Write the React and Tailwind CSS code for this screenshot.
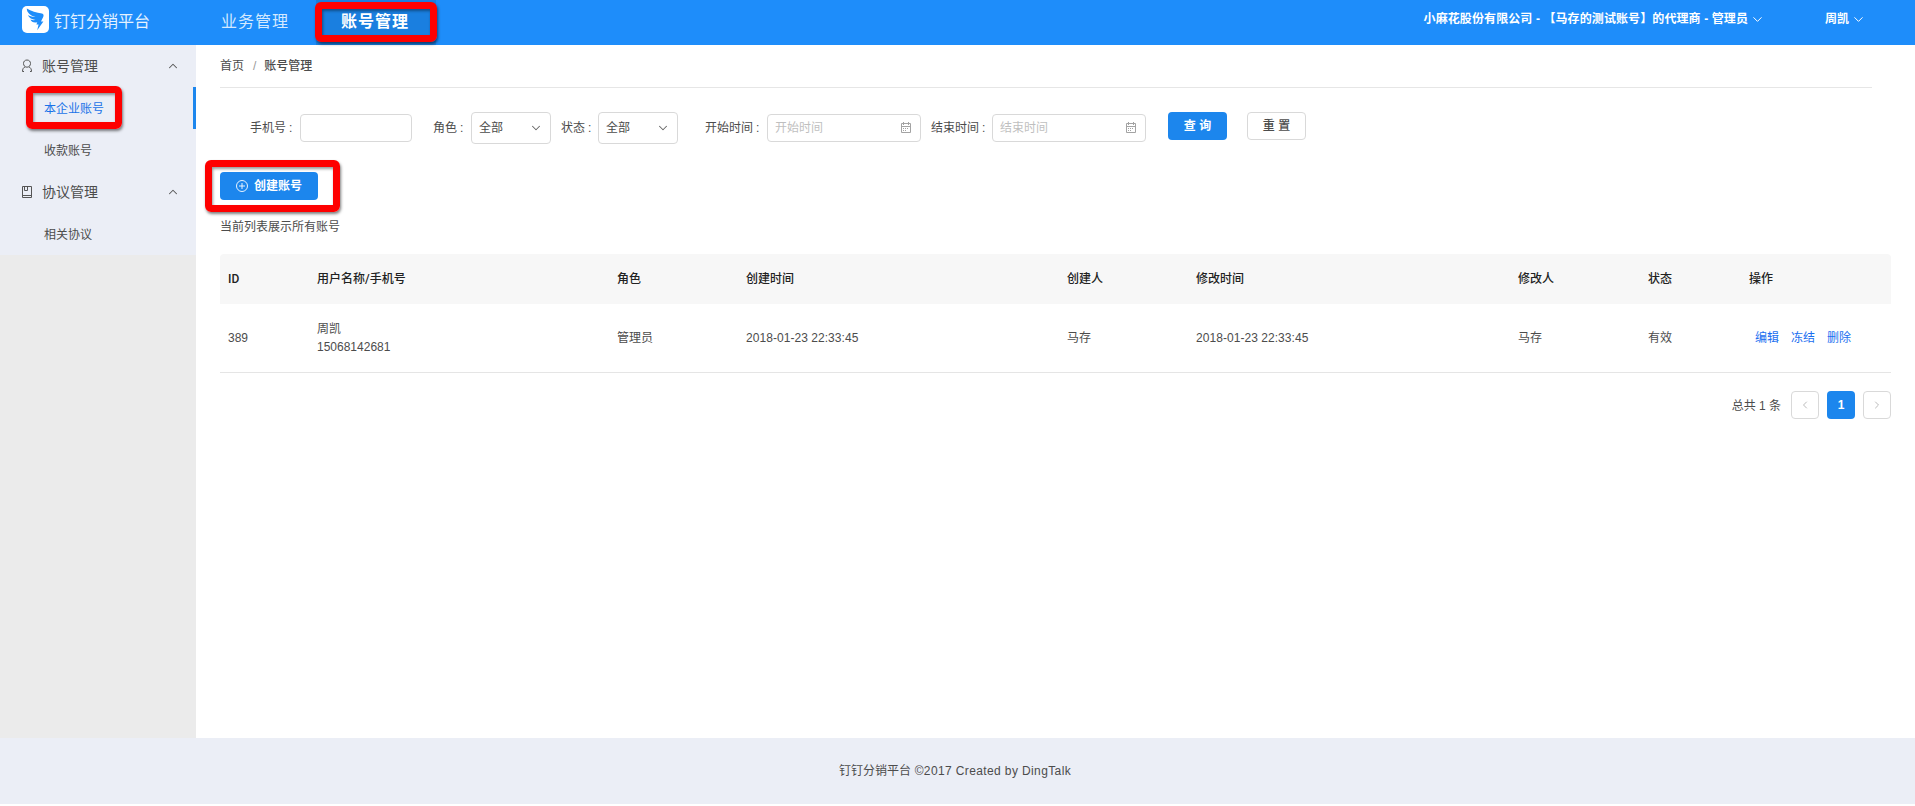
import { ChevronDown, ChevronUp, ChevronLeft, ChevronRight } from "lucide-react";

const columns = ["ID", "用户名称/手机号", "角色", "创建时间", "创建人", "修改时间", "修改人", "状态", "操作"];

const rows = [
    {
        id: 389,
        name: "周凯",
        phone: "15068142681",
        role: "管理员",
        createdAt: "2018-01-23 22:33:45",
        creator: "马存",
        updatedAt: "2018-01-23 22:33:45",
        updater: "马存",
        status: "有效",
    },
];

const gridCols = "grid grid-cols-[89px_300px_129px_321px_129px_322px_130px_101px_150px] items-center";

const Logo = () => (
    <svg viewBox="0 0 27 27" className="w-[27px] h-[27px] shrink-0">
        <rect width="27" height="27" rx="5" fill="#fff" />
        <path
            d="M4.8 2.4C9 5.2 14.5 6.2 20 7.6C21.6 8.1 21.9 9.4 21.3 10.8L19 15.4H21.4L15.2 24.2L16.6 18.4H14.4L15.3 16.2C11.6 17 9.4 15.6 8.4 13.4C10.2 14.2 12 14.3 13.6 14C9.2 13.4 6.800 11.6 6 9C8.400 10.400 11 11 13.600 11C8.200 9.300 4.800 6.600 4.800 2.400Z"
            fill="#1e8dfa"
        />
    </svg>
);

const UserIcon = () => (
    <svg viewBox="0 0 12 14" fill="none" stroke="#555" className="w-3 h-[14px]">
        <path d="M6 1C3.8 1 2.5 2.5 2.5 4.5S4 8.2 6 8.2S9.5 6.5 9.5 4.5S8.2 1 6 1ZM4.2 7.8C2.2 8.6 1.5 10.3 1.5 12.5H3M7.8 7.8C9.8 8.6 10.5 10.3 10.5 12.5H9" />
    </svg>
);

const BookIcon = () => (
    <svg viewBox="0 0 12 14" fill="none" stroke="#555" className="w-3 h-[14px]">
        <path d="M1.5 1.5H10.5V12.5H1.5ZM3.5 1.5V5.5H6.5V1.500M1.500 10.500H10.500" />
    </svg>
);

const CalendarIcon = () => (
    <svg viewBox="0 0 12 12" fill="none" stroke="#a3a3a3" className="w-3 h-3">
        <path d="M1.5 1.5H10.5V10.5H1.5ZM1.5 4.5H10.5M3.5 0V3M8.5 0V3" />
        <path d="M3 6.5H9M3 8.5H7" strokeDasharray="1 1" />
    </svg>
);

const PlusCircle = () => (
    <svg viewBox="0 0 12 12" fill="none" stroke="#fff" strokeWidth="0.9" className="w-3 h-3">
        <circle cx="6" cy="6" r="5.5" />
        <path d="M3 6H9M6 3V9" />
    </svg>
);

// red frame around the controls the guide points to
const Marker = ({ className }) => (
    <div
        className={`absolute border-[7px] border-[#fe0000] rounded-md shadow-[1px_2px_3px_rgba(0,0,0,0.5),inset_1px_2px_3px_rgba(0,0,0,0.4)] pointer-events-none ${className}`}
    />
);

const MenuGroup = ({ icon, title }) => (
    <div className="h-[42px] pl-[21px] pr-4 flex items-center text-sm">
        {icon}
        <span className="ml-[9px] -mt-px flex-1">{title}</span>
        <ChevronUp className="w-[14px] h-[14px] text-[#555]" strokeWidth={1.8} />
    </div>
);

const Label = ({ className, children }) => (
    <span className={`whitespace-nowrap ${className}`}>
        {children}
        <span className="ml-[3px]">:</span>
    </span>
);

const Select = () => (
    <div className="w-20 h-8 pl-[7px] pr-[7px] border border-[#d9d9d9] rounded flex items-center justify-between">
        全部
        <ChevronDown className="w-[14px] h-[14px] text-[#666]" strokeWidth={1.8} />
    </div>
);

const DateInput = ({ placeholder }) => (
    <div className="w-[154px] h-7 pl-[7px] pr-2 border border-[#d9d9d9] rounded flex items-center justify-between text-[#bfbfbf]">
        {placeholder}
        <CalendarIcon />
    </div>
);

const Header = () => (
    <header className="h-[45px] bg-[#1e8dfa] text-white flex shrink-0">
        <div className="w-[196px] pl-[22px] pb-[6px] flex items-center text-base whitespace-nowrap">
            <Logo />
            <span className="ml-[5px] mt-[5px] text-[#e5f2ff]">钉钉分销平台</span>
        </div>
        <nav className="flex text-base tracking-[1px]">
            <div className="w-[120px] pl-[25px] pb-[2px] flex items-center text-[#d4e9ff]">业务管理</div>
            <div className="relative w-[120px] pl-[25px] pb-[2px] flex items-center font-bold bg-[#1a7fe0]">
                账号管理
                <Marker className="-left-px top-[2px] w-[122px] h-10" />
            </div>
        </nav>
        <div className="ml-auto pr-[49px] pb-[7px] flex items-center text-xs font-bold">
            <span className="whitespace-pre tracking-[0.1px]">小麻花股份有限公司 - 【马存的测试账号】的代理商 - 管理员</span>
            <ChevronDown className="w-[15px] h-[15px] ml-[2px]" strokeWidth={1.6} />
            <span className="ml-[60px]">周凯</span>
            <ChevronDown className="w-[15px] h-[15px] ml-[2px]" strokeWidth={1.6} />
        </div>
    </header>
);

const Sidebar = () => (
    <aside className="w-[196px] shrink-0 bg-[#ebebeb]">
        <div className="bg-[#ebeef6]">
            <MenuGroup icon={<UserIcon />} title="账号管理" />
            <div className="relative h-[42px] pl-11 pt-px flex items-center text-[#1a73e8] border-r-[3px] border-[#1c86ed]">
                本企业账号
                <Marker className="left-[26px] -top-px w-24 h-[43px]" />
            </div>
            <div className="h-[42px] pl-11 pt-px flex items-center">收款账号</div>
            <MenuGroup icon={<BookIcon />} title="协议管理" />
            <div className="h-[42px] pl-11 pt-px flex items-center">相关协议</div>
        </div>
    </aside>
);

const SearchForm = () => (
    <div className="mt-6 h-8 flex items-center">
        <Label className="w-20 pl-[30px]">手机号</Label>
        <div className="w-28 h-7 border border-[#d9d9d9] rounded" />
        <Label className="w-[59px] pl-[21px]">角色</Label>
        <Select />
        <Label className="w-[47px] pl-[10px]">状态</Label>
        <Select />
        <Label className="w-[89px] pl-[27px]">开始时间</Label>
        <DateInput placeholder="开始时间" />
        <Label className="w-[71px] pl-[10px]">结束时间</Label>
        <DateInput placeholder="结束时间" />
        <button className="ml-[22px] mb-1 w-[59px] h-7 rounded bg-[#1c86ed] text-white font-bold">查 询</button>
        <button className="ml-5 mb-1 w-[59px] h-7 rounded border border-[#d9d9d9] font-medium">重 置</button>
    </div>
);

const AccountTable = () => (
    <div className="mt-[18px] w-[1671px]">
        <div className={`${gridCols} h-[50px] bg-[#f7f7f7] rounded-t text-[#222] font-medium font-[Roboto,'Noto_Sans_CJK_SC',sans-serif]`}>
            {columns.map((title) => (
                <div key={title} className="pl-2">{title}</div>
            ))}
        </div>
        {rows.map((row) => (
            <div key={row.id} className={`${gridCols} h-[69px] border-b border-[#e5e5e5]`}>
                <div className="pl-2">{row.id}</div>
                <div className="pl-2 leading-[18px]">
                    {row.name}
                    <br />
                    {row.phone}
                </div>
                <div className="pl-2">{row.role}</div>
                <div className="pl-2 tracking-[0.05px]">{row.createdAt}</div>
                <div className="pl-2">{row.creator}</div>
                <div className="pl-2 tracking-[0.05px]">{row.updatedAt}</div>
                <div className="pl-2">{row.updater}</div>
                <div className="pl-2">{row.status}</div>
                <div className="pl-[14px] flex gap-3 text-[#1a6ff0]">
                    <a>编辑</a>
                    <a>冻结</a>
                    <a>删除</a>
                </div>
            </div>
        ))}
    </div>
);

const Pagination = () => (
    <div className="mt-[18px] w-[1671px] h-7 flex items-center justify-end">
        <span className="mr-[10px] mt-px">总共 1 条</span>
        <button className="w-7 h-7 mr-2 border border-[#d9d9d9] rounded flex items-center justify-center text-[#bbb]">
            <ChevronLeft className="w-3 h-3" />
        </button>
        <button className="w-7 h-7 mr-2 rounded bg-[#1c86ed] text-white font-bold">1</button>
        <button className="w-7 h-7 border border-[#d9d9d9] rounded flex items-center justify-center text-[#bbb]">
            <ChevronRight className="w-3 h-3" />
        </button>
    </div>
);

const App = () => {
    return (
        <div className="h-[804px] flex flex-col bg-white text-xs text-[#4c4c4c] font-['Liberation_Sans','Noto_Sans_CJK_SC',sans-serif]">
            <Header />
            <div className="flex-1 flex">
                <Sidebar />
                <main className="flex-1 pl-6">
                    <div className="w-[1652px] h-[43px] flex items-center border-b border-[#e6e6e6]">
                        <span>首页</span>
                        <span className="ml-[9px] mr-2 text-[#999]">/</span>
                        <span className="font-medium">账号管理</span>
                    </div>
                    <SearchForm />
                    <div className="relative mt-7 w-[98px]">
                        <button className="w-full h-7 rounded bg-[#1c86ed] text-white font-bold flex items-center pl-4">
                            <PlusCircle />
                            <span className="ml-[6px]">创建账号</span>
                        </button>
                        <Marker className="-left-[15px] -top-3 w-[135px] h-[52px]" />
                    </div>
                    <div className="mt-[18px] leading-[18px]">当前列表展示所有账号</div>
                    <AccountTable />
                    <Pagination />
                </main>
            </div>
            <footer className="h-[66px] shrink-0 bg-[#ebeef6] flex items-center justify-center pr-[5px] whitespace-pre">
                钉钉分销平台<span className="tracking-[0.38px]"> ©2017 Created by DingTalk</span>
            </footer>
        </div>
    );
};

export default App;
